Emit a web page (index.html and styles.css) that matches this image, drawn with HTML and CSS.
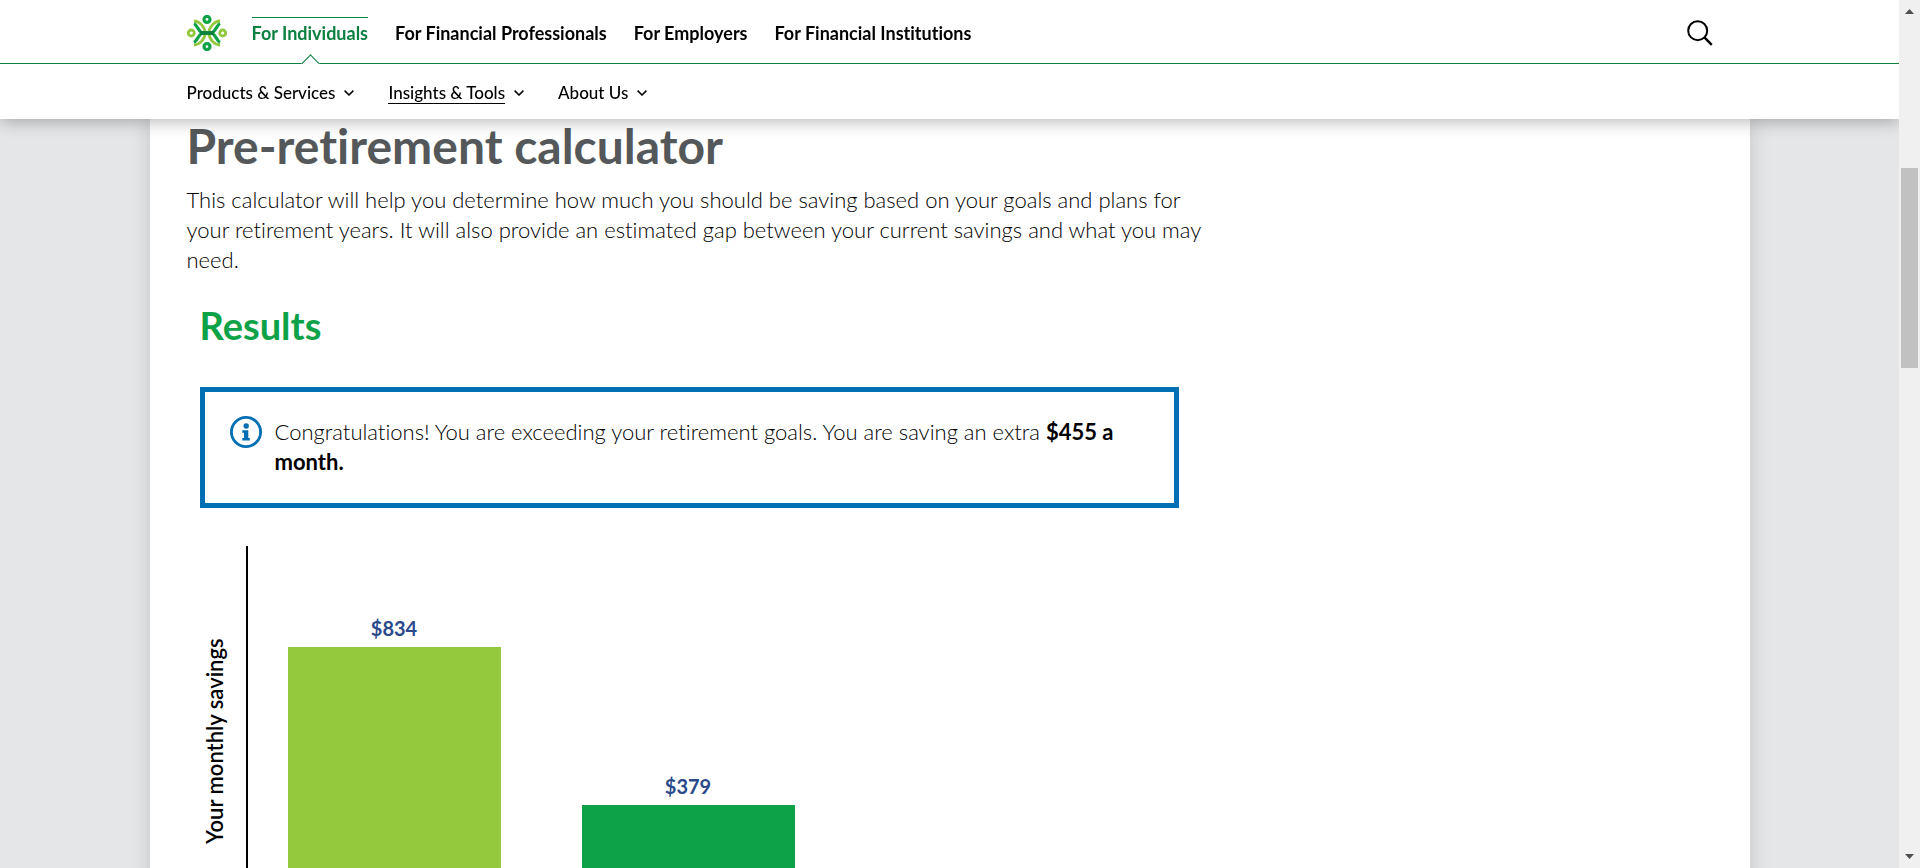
FILE: index.html
```html
<!DOCTYPE html>
<html lang="en">
<head>
<meta charset="utf-8">
<title>Pre-retirement calculator</title>
<link rel="stylesheet" href="styles.css">
</head>
<body>
<div class="viewport">
  <header class="header">
    <div class="header-row primary">
      <a class="logo" href="#" aria-label="Home">
        <svg viewBox="0 0 40 36" width="40" height="36" fill="none">
          <g stroke="#93c83d" stroke-width="2.8">
            <circle cx="4.3" cy="18" r="3"/>
            <circle cx="35.7" cy="18" r="3"/>
            <path d="M7 6C12 6 17.500 11 18.400 18C17.500 25 12 30 7 30"/>
            <path d="M33 6C28 6 22.500 11 21.600 18C22.500 25 28 30 33 30"/>
          </g>
          <g stroke="#0da247" stroke-width="3.2">
            <circle cx="20" cy="4.4" r="3"/>
            <circle cx="20" cy="31.6" r="3"/>
            <path d="M7 8.600C10 10 11 15.600 15 18C11 20.400 10 26 7 27.400"/>
            <path d="M33 8.600C30 10 29 15.600 25 18C29 20.400 30 26 33 27.400"/>
          </g>
          <path d="M13 16.400Q20 17 27 16.400L26.400 18L27 19.600Q20 19 13 19.600L13.600 18Z" fill="#0b8040" stroke="#0b8040"/>
        </svg>
      </a>
      <nav class="primary-nav" aria-label="Audience">
        <a class="active" href="#">For Individuals</a>
        <a href="#">For Financial Professionals</a>
        <a href="#">For Employers</a>
        <a href="#">For Financial Institutions</a>
      </nav>
      <button class="search" type="button" aria-label="Search">
        <svg viewBox="0 0 26 26" width="26" height="26" fill="none" stroke="#000" stroke-width="2">
          <circle cx="10.7" cy="10.7" r="9.5"/>
          <path d="M17.4 17.4L24.8 24.8" stroke-width="2.4"/>
        </svg>
      </button>
    </div>
    <nav class="header-row secondary" aria-label="Sections">
      <button type="button"><span>Products &amp; Services</span><svg viewBox="0 0 10 6" width="10" height="6"><path d="M.6.6L5 5L9.400 .6"/></svg></button>
      <button type="button" class="current"><span>Insights &amp; Tools</span><svg viewBox="0 0 10 6" width="10" height="6"><path d="M.6.6L5 5L9.400 .6"/></svg></button>
      <button type="button"><span>About Us</span><svg viewBox="0 0 10 6" width="10" height="6"><path d="M.6.6L5 5L9.400 .6"/></svg></button>
    </nav>
  </header>
  <main class="page">
    <div class="column">
      <h1>Pre-retirement calculator</h1>
      <p class="intro">This calculator will help you determine how much you should be saving based on your goals and plans for your retirement years. It will also provide an estimated gap between your current savings and what you may need.</p>
      <section class="results">
        <h2>Results</h2>
        <div class="notice" role="status">
          <svg class="info" viewBox="0 0 32 32" width="32" height="32">
            <circle cx="16" cy="16" r="14.600" fill="none" stroke="#006fb3" stroke-width="2.800"/>
            <circle cx="16.200" cy="10" r="2.700" fill="#006fb3"/>
            <path d="M12.300 14.200H18.300V22H19.800V24.600H12.300V22H14V16.800H12.300Z" fill="#006fb3"/>
          </svg>
          <p>Congratulations! You are exceeding your retirement goals. You are saving an extra <strong>$455 a month.</strong></p>
        </div>
        <div class="chart">
          <div class="axis-label">Your monthly savings</div>
          <div class="plot">
            <div class="bar-group"><span>$834</span><div class="bar lime" style="height:74.1%"></div></div>
            <div class="bar-group"><span>$379</span><div class="bar green" style="height:33.7%"></div></div>
          </div>
        </div>
      </section>
    </div>
  </main>
</div>
<div class="scrollbar" aria-hidden="true">
  <svg viewBox="0 0 9 5" width="9" height="5"><path d="M0 5L4.500 0L9 5Z"/></svg>
  <div class="track"><div class="thumb"></div></div>
  <svg viewBox="0 0 9 5" width="9" height="5"><path d="M0 0L4.500 5L9 0Z"/></svg>
</div>
</body>
</html>
```
FILE: styles.css
```css
* { box-sizing: border-box; }

body {
  margin: 0;
  height: 100vh;
  display: flex;
  overflow: hidden;
  background: #e5e6e8;
  color: #000;
  font-family: Lato, "Open Sans", sans-serif;
  font-size: 22px;
  line-height: 30px;
  font-weight: 300;
  font-variant-ligatures: none;
}

h1, h2, p { margin: 0; }
a { color: inherit; text-decoration: none; }
button { padding: 0; border: 0; background: none; font: inherit; color: inherit; cursor: pointer; }
svg { display: block; flex: none; }
strong { font-weight: 700; }

.viewport { flex: 1; min-width: 0; overflow: hidden; }

/* Header */
.header {
  position: sticky;
  top: 0;
  z-index: 1;
  background: #fff;
  box-shadow: 0 2px 16px rgba(0, 0, 0, 0.3);
}
.header-row {
  display: flex;
  align-items: center;
  padding: 0 max(24px, calc((100% - 1526px) / 2));
}
.primary { height: 64px; padding-top: 2px; border-bottom: 1px solid #0b8040; }
.logo { margin-right: 25px; }
.primary-nav {
  display: flex;
  align-self: stretch;
  gap: 27px;
  font-size: 18px;
  line-height: 20px;
  font-weight: 700;
}
.primary-nav a { position: relative; margin-top: 15px; padding-top: 5px; border-top: 1px solid transparent; }
.primary-nav .active { color: #0b8040; border-color: #0b8040; }
.primary-nav .active::after {
  content: "";
  position: absolute;
  left: 50%;
  bottom: -7px;
  width: 12px;
  height: 12px;
  margin-left: -6px;
  background: #fff;
  border: solid #0b8040;
  border-width: 1px 0 0 1px;
  transform: rotate(45deg);
}
.search { margin-left: auto; }
.secondary { height: 55px; padding-top: 2px; gap: 34px; font-size: 17px; line-height: 20px; }
.secondary button { display: flex; align-items: center; gap: 9px; font-weight: 500; }
.secondary path { fill: none; stroke: #000; stroke-width: 1.5; }
.current span { box-shadow: 0 1px #000; }

/* Content */
.page {
  max-width: 1600px;
  min-height: 100%;
  margin: 0 auto;
  padding: 0 37px;
  background: #fff;
  box-shadow: 0 0 20px rgba(0, 0, 0, 0.15);
}
.column { max-width: 1034px; }
h1 { padding-bottom: 13px; color: #55585a; font-size: 48px; line-height: 53px; font-weight: 700; }
.results { max-width: 1004px; padding: 25px 12px 0 13px; }
h2 { color: #0da247; font-size: 38px; line-height: 50px; font-weight: 700; }
.notice {
  display: flex;
  gap: 13px;
  margin-top: 37px;
  padding: 24px 24px 26px 25px;
  border: 5px solid #006fb3;
}
.notice p { padding: 1px 16px 0 0; }

/* Chart */
.chart { display: flex; height: 390px; margin-top: 38px; }
.axis-label {
  width: 46px;
  font-weight: 600;
  writing-mode: vertical-rl;
  transform: rotate(180deg);
  text-align: center;
}
.plot { display: flex; gap: 81px; padding-left: 40px; border-left: 2px solid #000; }
.bar-group { display: flex; flex-direction: column; justify-content: flex-end; width: 213px; text-align: center; }
.bar-group span { padding-bottom: 4px; color: #2b4a8b; font-size: 20px; font-weight: 700; }
.lime { background: #94c93d; }
.green { background: #0da247; }

/* Scrollbar */
.scrollbar {
  display: flex;
  flex-direction: column;
  align-items: center;
  width: 21px;
  padding: 9px 2px;
  background: #f0f0f0;
}
.scrollbar path { fill: #505050; }
.track { flex: 1; align-self: stretch; padding-top: 154px; }
.thumb { height: 200px; background: #c1c1c1; }
```
